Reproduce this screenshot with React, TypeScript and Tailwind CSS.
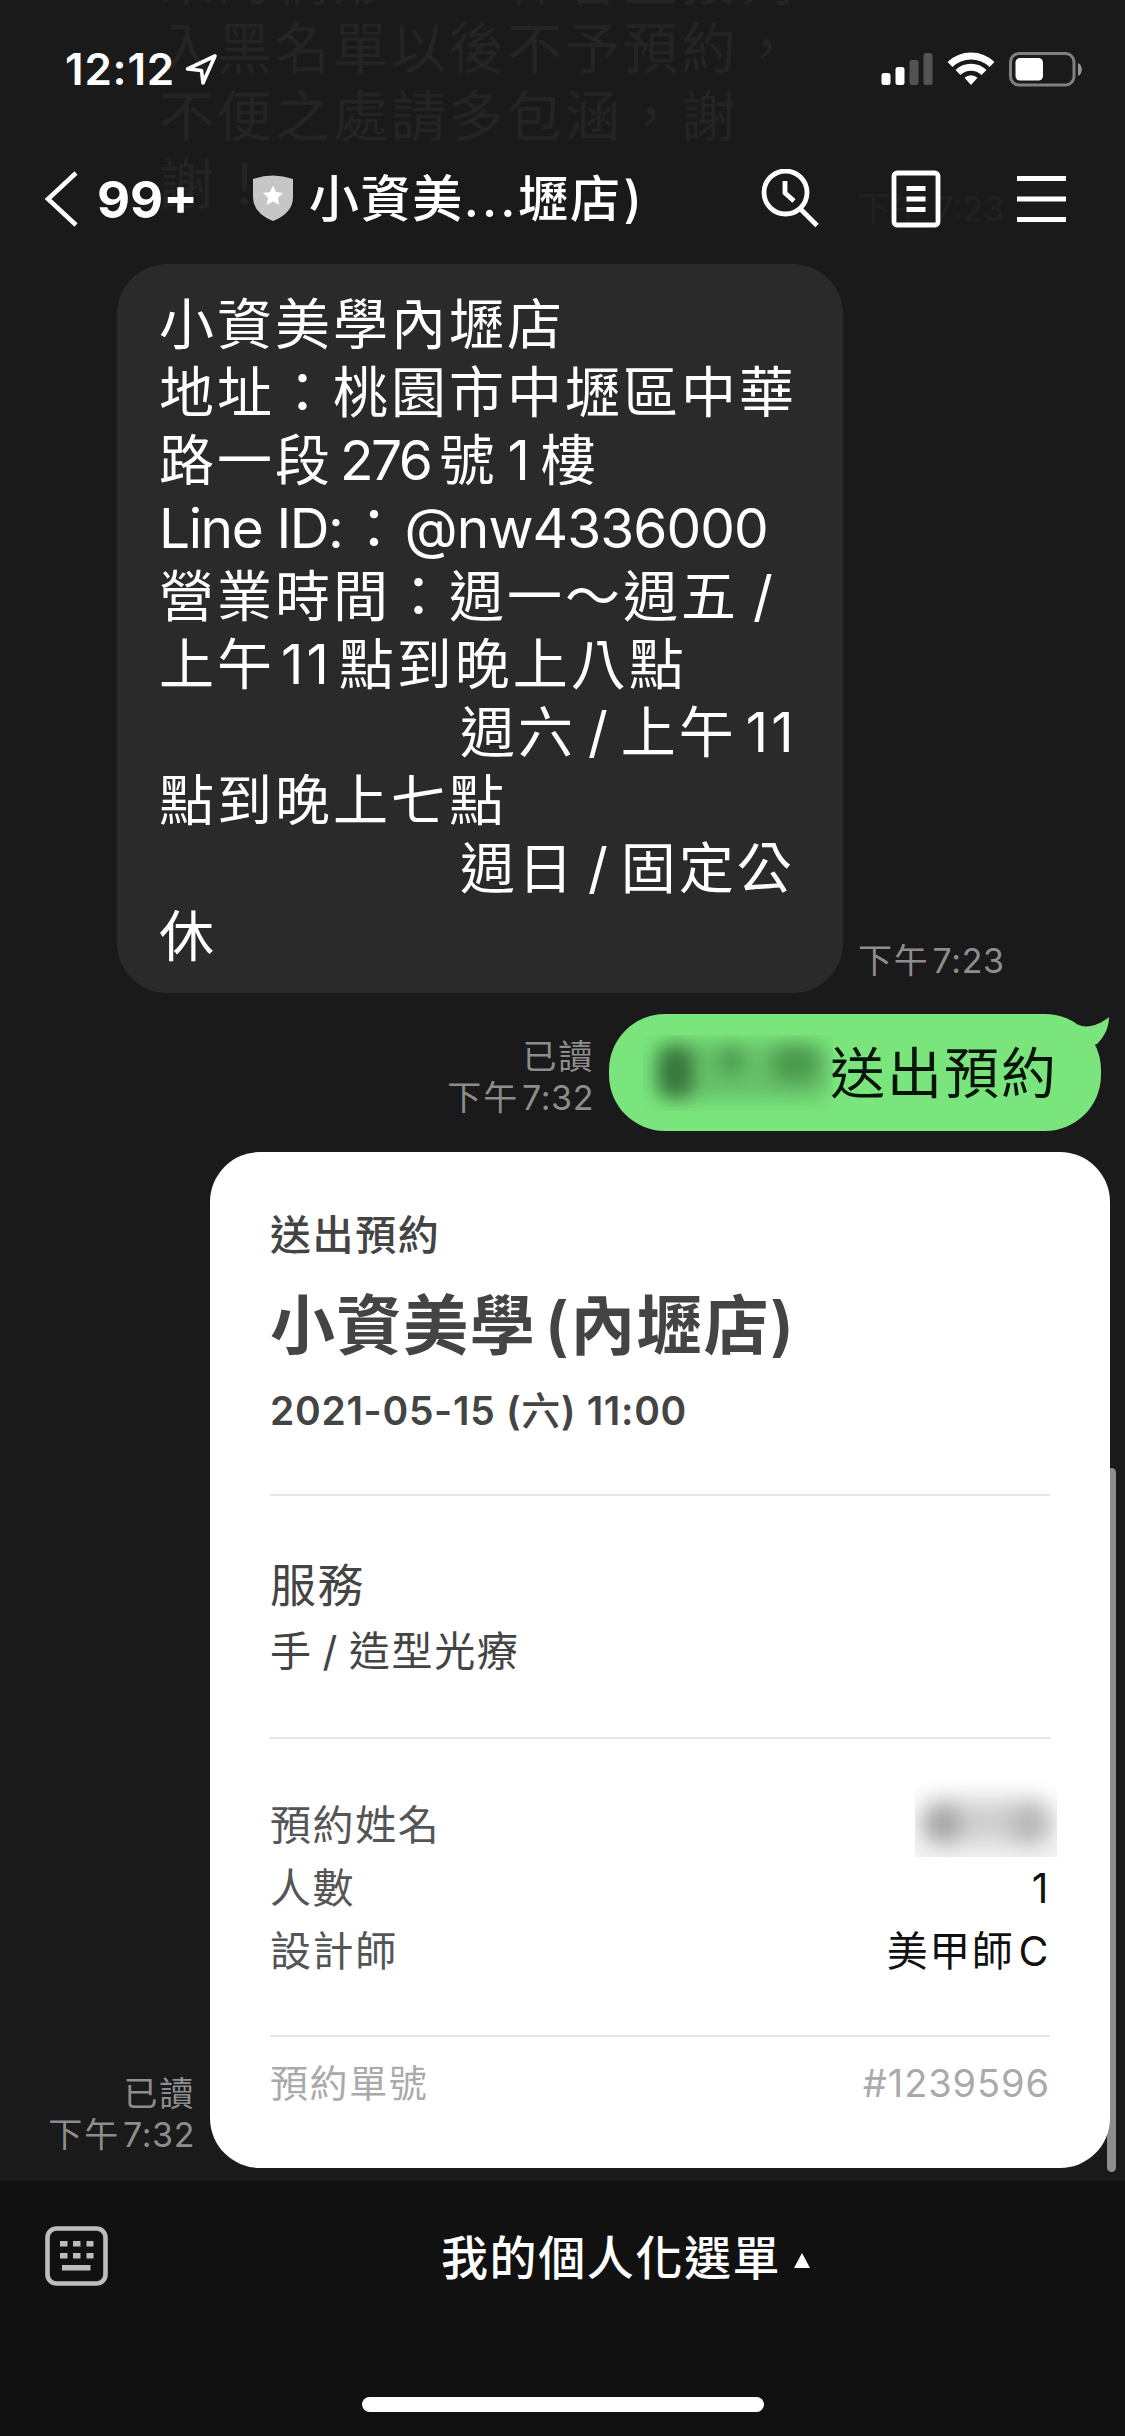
import type { ReactNode } from "react";

// Latin runs sit tighter than the CJK around them, so they carry their own tracking.
const Latin = ({ children, className = "tracking-[-2px]" }: { children: ReactNode; className?: string }) => (
  <span className={className}>{children}</span>
);

// Tail end of the previous message, barely visible through the header.
const FADED_LINES = ["來的情形，一律會直接列", "入黑名單以後不予預約，", "不便之處請多包涵，謝", "謝！"];

const DETAILS: { label: string; value: ReactNode }[] = [
  { label: "人數", value: "1" },
  { label: "設計師", value: <>美甲師<Latin className="ml-1">C</Latin></> },
];

function StatusBar() {
  return (
    <div className="flex h-[138px] items-center pl-[65px] pr-[43px]">
      <span className="text-[44px] font-semibold leading-none tracking-[0.8px]">12:12</span>
      <svg viewBox="0 0 34 34" className="ml-[9px] h-[34px] w-[34px]" fill="none" stroke="currentColor" strokeWidth="3.6" strokeLinejoin="round" aria-hidden>
        <path d="M31 4 3.5 17l14 1.5L19 31Z" />
      </svg>
      <svg viewBox="0 0 202 36" className="ml-auto h-9 w-[202px]" fill="currentColor" aria-hidden>
        <rect x="1.5" y="22" width="9" height="12" rx="2.5" />
        <rect x="15.5" y="16" width="9" height="18" rx="2.5" />
        <rect x="29.500" y="9" width="9" height="25" rx="2.5" opacity=".25" />
        <rect x="43.500" y="2" width="9" height="32" rx="2.5" opacity=".25" />
        <g fill="none" stroke="currentColor" strokeWidth="7">
          <path d="M70 13.5a30 30 0 0 1 42 0" />
          <path d="M78 21.5a18.5 18.5 0 0 1 26 0" />
        </g>
        <path d="m91 34-6.5-7.2a9.5 9.5 0 0 1 13 0Z" />
        <rect x="130.5" y="2.5" width="63.5" height="31.5" rx="8.5" fill="none" stroke="currentColor" strokeWidth="3" opacity=".45" />
        <rect x="135.5" y="7" width="27.5" height="22.5" rx="4.5" />
        <path d="M198 12c5 2 5 11 0 13Z" opacity=".55" />
      </svg>
    </div>
  );
}

function ChatHeader() {
  return (
    <header className="relative h-[264px] shrink-0 overflow-hidden">
      <div className="absolute left-[159px] top-[-54px] text-[55px] leading-[68px] tracking-[3px] text-[#242424]" aria-hidden>
        {FADED_LINES.map((line) => (
          <p key={line} className="whitespace-nowrap">{line}</p>
        ))}
      </div>
      <span className="absolute left-[857px] top-[187px] text-[34px] leading-[44px] text-[#212121]" aria-hidden>下午 7:23</span>

      <div className="relative">
        <StatusBar />
        <div className="flex h-[122px] items-center pl-[44px] pr-[59px]">
          <svg viewBox="0 0 34 56" className="h-14 w-[34px]" fill="none" stroke="currentColor" strokeWidth="4.5" aria-hidden>
            <path d="M32 2 4 28l28 26" />
          </svg>
          <span className="ml-[19px] w-[98px] text-[51px] font-bold leading-none">99+</span>
          <svg viewBox="0 0 40 46" className="ml-[58px] mt-[-2px] h-[46px] w-10" aria-hidden>
            <path d="M0 4Q20-3 40 4v18Q40 38 20 46 0 38 0 22Z" fill="#c6c6c6" />
            <path d="m20 10.5 3 6.5 7 .9-5.1 4.9 1.3 7L20 26.4l-6.2 3.4 1.3-7L10 17.9l7-.9Z" fill="#fff" />
          </svg>
          <h1 className="ml-[16px] flex whitespace-nowrap text-[50px] font-medium leading-[60px] tracking-[1.6px]">
            小資美<Latin className="tracking-[3px]">...</Latin>壢店<Latin className="ml-[2px]">)</Latin>
          </h1>
          <div className="ml-auto flex items-center">
            <svg viewBox="0 0 60 60" className="h-[60px] w-[60px]" fill="none" stroke="currentColor" strokeWidth="4.8" aria-hidden>
              <circle cx="25.5" cy="23.5" r="21.5" />
              <path d="m40.500 40 16.500 16.500M25 12v12l9 8" />
            </svg>
            <svg viewBox="0 0 50 58" className="ml-[71px] h-[58px] w-[50px]" fill="none" stroke="currentColor" strokeWidth="4.8" aria-hidden>
              <rect x="3" y="3" width="44" height="52" rx="3" />
              <path d="M15.5 18.5h19M15.5 29h19M15.5 39.5h19" />
            </svg>
            <svg viewBox="0 0 49 48" className="ml-[76px] h-12 w-[49px]" stroke="currentColor" strokeWidth="4.8" aria-hidden>
              <path d="M0 3.5h49M0 24h49M0 44.5h49" />
            </svg>
          </div>
        </div>
      </div>
    </header>
  );
}

// Read receipt and time, stacked beside an outgoing message.
const ReadStamp = () => (
  <div className="text-right text-[34px] leading-[41px] tracking-[1.8px] text-[#8d8d8d]">
    <p>已讀</p>
    <p>下午<Latin className="ml-[3px] tracking-[0.6px]">7:32</Latin></p>
  </div>
);

function StoreMessage() {
  return (
    <div className="flex items-end pl-[117px]">
      <div className="h-[729px] w-[726px] whitespace-pre rounded-[50px] bg-[#2a2a2a] pl-[42px] pt-[26px] text-[55px] leading-[68px] tracking-[3px]">
        <p>小資美學內壢店</p>
        <p>地址：桃園市中壢區中華</p>
        <p>路一段<Latin className="ml-[7px] mr-[9px] tracking-[-2.5px]">276</Latin>號<Latin className="ml-[10px] mr-2">1</Latin>樓</p>
        <p><Latin className="mr-1 tracking-[-1.4px]">Line ID:</Latin>：<Latin className="tracking-[-0.9px]">@nw4336000</Latin></p>
        <p>營業時間：週一～週五<Latin className="ml-[14px]">/</Latin></p>
        <p>上午<Latin className="ml-[6px] mr-[7px]">11</Latin>點到晚上八點</p>
        <p className="pl-[301px]">週六<Latin className="ml-3 mr-[10px]">/</Latin>上午<Latin className="ml-[9px]">11</Latin></p>
        <p>點到晚上七點</p>
        <p className="pl-[301px]">週日<Latin className="ml-3 mr-[10px]">/</Latin>固定公</p>
        <p>休</p>
      </div>
      <p className="mb-[10px] ml-[15px] text-[34px] leading-[44px] tracking-[1.8px] text-[#8d8d8d]">
        下午<Latin className="ml-[3px] tracking-[0.6px]">7:23</Latin>
      </p>
    </div>
  );
}

function OwnMessage() {
  return (
    <div className="mt-[21px] flex items-end justify-end pr-[24px]">
      <div className="mb-[13px] mr-[15px]"><ReadStamp /></div>
      <div className="relative flex h-[117px] w-[492px] items-center justify-end rounded-[56px] bg-[#7ae47d] pr-[43px]">
        <svg viewBox="0 0 40 40" className="absolute right-[-8px] top-[2px] h-10 w-10" fill="#7ae47d" aria-hidden>
          <path d="M9 8.500C17 13 31 9 40 1c0 11-5 20-12 27L8 34Z" />
        </svg>
        {/* Sender's name is masked */}
        <div className="relative mr-[-3px] h-[76px] w-[190px] overflow-hidden">
          <div className="absolute left-3 top-2 h-[56px] w-[174px] rounded-2xl bg-[#66c169] blur-[9px]" />
          <div className="absolute left-[16px] top-3 h-[50px] w-[34px] rounded-xl bg-[#37763b] blur-[9px]" />
          <div className="absolute left-[76px] top-3 h-[28px] w-[24px] rounded-xl bg-[#4c9a50] blur-[9px]" />
          <div className="absolute left-[130px] top-3 h-[34px] w-[44px] rounded-xl bg-[#4a984d] blur-[9px]" />
        </div>
        <span className="whitespace-nowrap text-[55px] leading-[68px] tracking-[2px] text-[#071407]">送出預約</span>
      </div>
    </div>
  );
}

function BookingCard() {
  return (
    <div className="mt-[21px] flex items-end justify-end pr-[15px]">
      <div className="mb-[13px] mr-[15px]"><ReadStamp /></div>
      <section className="h-[1016px] w-[900px] rounded-[50px] bg-white px-[60px] text-[41px] leading-[63px] tracking-[1.6px] text-[#444]">
        <div className="h-[344px] border-b-2 border-[#e6e6e6] pt-[52px]">
          <p className="font-medium">送出預約</p>
          <h2 className="mt-[11px] whitespace-nowrap text-[65px] font-bold leading-[96px] tracking-[1.6px]">
            小資美學<Latin className="ml-2 font-semibold">(</Latin>內壢店<Latin className="font-semibold">)</Latin>
          </h2>
          <p className="mt-[7px] text-[39px] font-semibold leading-[60px] tracking-[0.7px]">
            2021-05-15 (<span className="font-medium">六</span>) 11:00
          </p>
        </div>
        <div className="h-[243px] border-b-2 border-[#e6e6e6] pt-[56px]">
          <p className="text-[46px] leading-[66px]">服務</p>
          <p className="leading-[66px]">手<Latin className="mx-[10px]">/</Latin>造型光療</p>
        </div>
        <div className="h-[298px] border-b-2 border-[#e6e6e6] pt-[55px]">
          <div className="flex justify-between">
            <span className="text-[#555]">預約姓名</span>
            {/* Customer's name is masked */}
            <div className="relative mr-[-7px] mt-[-14px] h-[77px] w-[142px] overflow-hidden bg-gradient-to-b from-white to-[#f3f3f3]">
              <div className="absolute left-2 top-5 h-[44px] w-[128px] rounded-2xl bg-[#cfcfcf] blur-[11px]" />
              <div className="absolute left-3 top-7 h-[32px] w-[32px] rounded-full bg-[#999] blur-[11px]" />
              <div className="absolute right-3 top-7 h-[32px] w-[32px] rounded-full bg-[#b0b0b0] blur-[11px]" />
            </div>
          </div>
          {DETAILS.map((d) => (
            <div key={d.label} className="flex justify-between">
              <span className="text-[#555]">{d.label}</span>
              <span className="text-[#111]">{d.value}</span>
            </div>
          ))}
        </div>
        <div className="flex justify-between pt-[15px] text-[38px] text-[#aaa]">
          <span>預約單號</span>
          <span className="tracking-[0.9px]">#1239596</span>
        </div>
      </section>
    </div>
  );
}

function MenuBar() {
  return (
    <footer className="flex h-[255px] flex-col items-center bg-[#111]">
      <div className="flex h-[153px] w-full items-center pl-[45px]">
        <svg viewBox="0 0 63 60" className="mt-[-4px] h-[60px] w-[63px]" fill="#bdbdbd" aria-hidden>
          <rect x="2.5" y="2.5" width="58" height="55" rx="9" fill="none" stroke="#bdbdbd" strokeWidth="4.6" />
          <path d="M15 15h7.500v5.500H15ZM28 15h7.500v5.500H28ZM41.500 15h7v5.500h-7ZM15 27h7.500v5.500H15ZM28 27h7.500v5.500H28ZM41.500 27h7v5.500h-7ZM17 39h28.500v5.500H17Z" />
        </svg>
        <span className="ml-[333px] text-[47px] font-medium leading-[64px] tracking-[1.6px]">我的個人化選單</span>
        <svg viewBox="0 0 16 15" className="ml-[13px] mt-[6px] h-[15px] w-4" fill="currentColor" aria-hidden>
          <path d="M8 0 16 15H0Z" />
        </svg>
      </div>
      <div className="mt-[63px] h-[15px] w-[402px] rounded-full bg-white" />
    </footer>
  );
}

export default function App() {
  return (
    <div lang="zh-Hant" className="relative flex h-[2436px] w-[1125px] flex-col overflow-hidden bg-[#1a1a1a] font-['Inter','Noto_Sans_CJK_TC',sans-serif] text-white">
      <ChatHeader />
      <main className="h-[1917px] shrink-0">
        <StoreMessage />
        <OwnMessage />
        <BookingCard />
      </main>
      <MenuBar />
      {/* Scroll thumb floats over the card's right edge */}
      <div className="absolute left-[1107px] top-[1468px] h-[704px] w-[9px] rounded-full bg-white/50" />
    </div>
  );
}
